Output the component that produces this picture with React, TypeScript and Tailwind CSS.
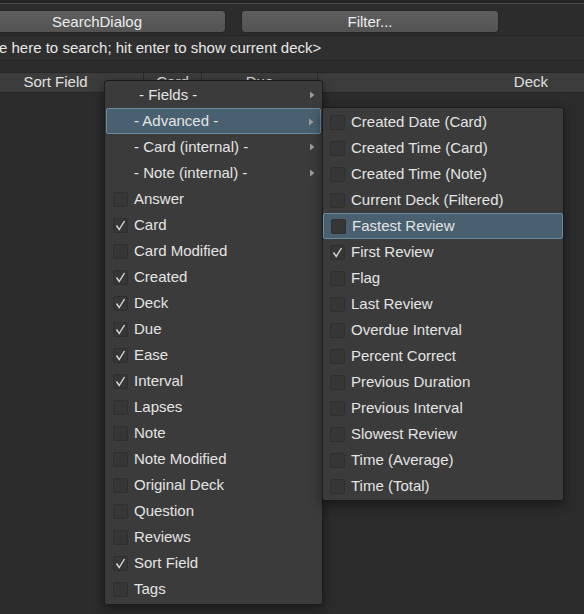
import React from "react"

const fields = [
  { label: "Answer", on: false },
  { label: "Card", on: true },
  { label: "Card Modified", on: false },
  { label: "Created", on: true },
  { label: "Deck", on: true },
  { label: "Due", on: true },
  { label: "Ease", on: true },
  { label: "Interval", on: true },
  { label: "Lapses", on: false },
  { label: "Note", on: false },
  { label: "Note Modified", on: false },
  { label: "Original Deck", on: false },
  { label: "Question", on: false },
  { label: "Reviews", on: false },
  { label: "Sort Field", on: true },
  { label: "Tags", on: false },
]

const advanced = [
  { label: "Created Date (Card)", on: false },
  { label: "Created Time (Card)", on: false },
  { label: "Created Time (Note)", on: false },
  { label: "Current Deck (Filtered)", on: false },
  { label: "Fastest Review", on: false, hot: true },
  { label: "First Review", on: true },
  { label: "Flag", on: false },
  { label: "Last Review", on: false },
  { label: "Overdue Interval", on: false },
  { label: "Percent Correct", on: false },
  { label: "Previous Duration", on: false },
  { label: "Previous Interval", on: false },
  { label: "Slowest Review", on: false },
  { label: "Time (Average)", on: false },
  { label: "Time (Total)", on: false },
]

function Check({ on }: { on: boolean }) {
  return (
    <span className="flex h-[15px] w-[15px] shrink-0 items-center justify-center rounded-[2px] border border-[#2f2f2f] bg-[#363636]">
      {on && (
        <svg width="13" height="13" viewBox="0 0 13 13" aria-hidden="true">
          <path d="M2.5 6.5 L5.2 10.5 L10.5 2" fill="none" stroke="#d8d8d8" strokeWidth="1.4" />
        </svg>
      )}
    </span>
  )
}

function Arrow() {
  return (
    <svg width="6" height="8" viewBox="0 0 6 8" className="absolute right-[6px] top-[9px]" aria-hidden="true">
      <path d="M1 0.5 L5.5 4 L1 7.5 Z" fill="#9a9a9a" />
    </svg>
  )
}

function Row({ label, on, hot }: { label: string; on: boolean; hot?: boolean }) {
  return (
    <div
      className={`flex h-[26px] items-center gap-[6px] pl-[7px] ${
        hot ? "rounded-[2px] border border-[#6b8a9c] bg-[#48606f] pl-[6px]" : ""
      }`}
    >
      <Check on={on} />
      <span>{label}</span>
    </div>
  )
}

export default function App() {
  return (
    <div
      className="relative h-[614px] w-[584px] overflow-hidden bg-[#2c2c2c] text-[15px] text-[#e4e4e4]"
      style={{ fontFamily: '"Liberation Sans", Arial, sans-serif' }}
    >
      {/* Window top edge */}
      <div className="h-[3px] bg-[#242424]" />
      <div className="h-px bg-[#4a4a4a]" />

      {/* Buttons */}
      <div className="mt-[6px] flex gap-[15px]">
        <button className="-ml-[32px] h-[23px] w-[258px] rounded-[4px] border border-[#262626] bg-gradient-to-b from-[#5e5e5e] to-[#535353] text-[15px] leading-none text-[#ececec]">
          SearchDialog
        </button>
        <button className="h-[23px] w-[258px] rounded-[4px] border border-[#262626] bg-gradient-to-b from-[#5e5e5e] to-[#535353] text-[15px] leading-none text-[#ececec]">
          Filter...
        </button>
      </div>

      {/* Search box */}
      <div className="mt-[2px] flex h-[26px] items-center border-y border-[#242424] bg-[#2f2f2f]">
        <span className="-ml-[1px] whitespace-nowrap text-[#e8e8e8]">e here to search; hit enter to show current deck&gt;</span>
      </div>

      {/* Table header */}
      <div className="mt-[11px] flex h-[21px] items-center border-y border-[#262626] bg-[#3c3c3c] text-[#e0e0e0]">
        <div className="-ml-[32px] flex h-full w-[176px] items-center justify-center border-r border-[#2a2a2a]">Sort Field</div>
        <div className="flex h-full w-[58px] items-center justify-center border-r border-[#2a2a2a]">Card</div>
        <div className="flex h-full w-[116px] items-center justify-center border-r border-[#2a2a2a]">Due</div>
        <div className="flex h-full flex-1 items-center justify-end pr-[36px]">Deck</div>
      </div>

      {/* Column menu */}
      <div className="absolute left-[104px] top-[80px] w-[219px] rounded-[3px] border border-[#1c1c1c] bg-[#3b3b3b] px-px pb-[2px] pt-px shadow-[0_4px_12px_rgba(0,0,0,0.45)]">
        <div className="relative flex h-[26px] items-center pl-[33px]">
          - Fields -
          <Arrow />
        </div>
        <div className="relative flex h-[26px] items-center rounded-[2px] border border-[#6b8a9c] bg-[#48606f] pl-[27px]">
          - Advanced -
          <Arrow />
        </div>
        <div className="relative flex h-[26px] items-center pl-[28px]">
          - Card (internal) -
          <Arrow />
        </div>
        <div className="relative flex h-[26px] items-center pl-[28px]">
          - Note (internal) -
          <Arrow />
        </div>
        {fields.map((f) => (
          <Row key={f.label} label={f.label} on={f.on} />
        ))}
      </div>

      {/* Advanced submenu */}
      <div className="absolute left-[322px] top-[107px] w-[242px] rounded-[3px] border border-[#1c1c1c] bg-[#3b3b3b] py-px shadow-[0_4px_12px_rgba(0,0,0,0.45)]">
        {advanced.map((f) => (
          <Row key={f.label} label={f.label} on={f.on} hot={f.hot} />
        ))}
      </div>
    </div>
  )
}
